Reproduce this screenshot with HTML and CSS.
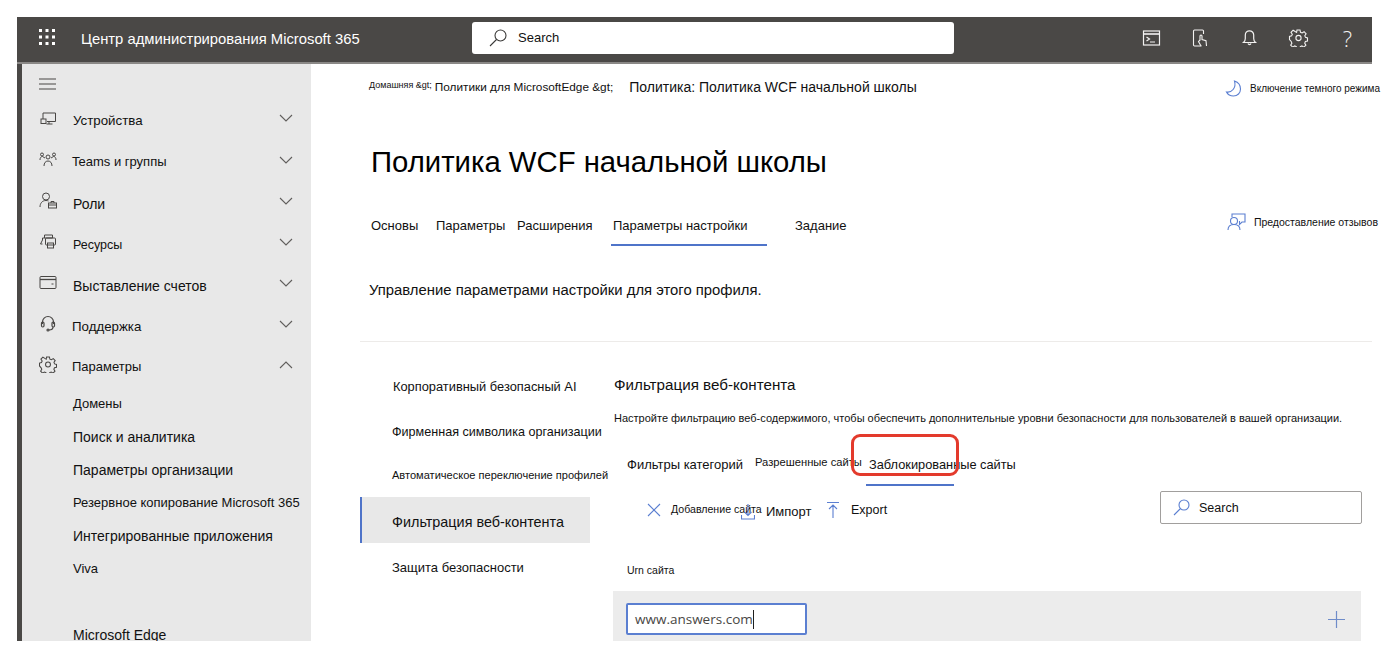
FILE: index.html
```html
<!DOCTYPE html>
<html lang="ru">
<head>
<meta charset="utf-8">
<title>Центр администрирования Microsoft 365</title>
<link rel="stylesheet" href="styles.css">
</head>
<body>
<div class="shell">
  <header class="topbar">
    <div class="waffle"><svg width="16" height="16" viewBox="0 0 16 16" fill="#fff"><rect x="0" y="0" width="3" height="3"/><rect x="6.5" y="0" width="3" height="3"/><rect x="13" y="0" width="3" height="3"/><rect x="0" y="6.5" width="3" height="3"/><rect x="6.5" y="6.5" width="3" height="3"/><rect x="13" y="6.5" width="3" height="3"/><rect x="0" y="13" width="3" height="3"/><rect x="6.5" y="13" width="3" height="3"/><rect x="13" y="13" width="3" height="3"/></svg></div>
    <div class="appname">Центр администрирования Microsoft 365</div>
    <div class="topsearch">
      <svg width="20" height="20" viewBox="0 0 20 20" fill="none" stroke="#3b3a39" stroke-width="1.1"><circle cx="12.5" cy="7.5" r="5.5"/><path d="M8.5 11.5 2 18"/></svg>
      <span>Search</span>
    </div>
    <div class="topicons">
      <svg width="18" height="16" viewBox="0 0 18 16" fill="none" stroke="#f3f2f1" stroke-width="1.2"><rect x="1" y="1" width="16" height="14"/><path d="M1 4h16" stroke-width="1.6"/><path d="M4 7l3 2-3 2M7.500 12h5"/></svg>
      <svg width="16" height="18" viewBox="0 0 16 18" fill="none" stroke="#f3f2f1" stroke-width="1.1"><path d="M9 17H2a1 1 0 0 1-1-1V2a1 1 0 0 1 1-1h8a1 1 0 0 1 1 1v3"/><path d="M7.500 11.500V7a1 1 0 0 1 2 0v3.500l4 1.200.5 5.300M7.500 11l-1.500 1.500 2.500 4.500"/></svg>
      <svg width="14" height="17" viewBox="0 0 14 17" fill="none" stroke="#f3f2f1" stroke-width="1.2"><path d="M1 13.500h12c-1.200-1-1.800-2-1.800-4V6A4.200 4.200 0 0 0 2.800 6v3.500c0 2-.6 3-1.800 4z"/><path d="M5.500 14.500a1.600 1.600 0 0 0 3 0"/></svg>
      <svg width="18" height="18" viewBox="0 0 18 18" fill="none" stroke="#f3f2f1" stroke-width="1.1"><circle cx="9" cy="9" r="2.600"/><path d="M7.500 1h3l.5 2.300 1.600.7 2-1.300 2 2.100-1.300 2 .7 1.600 2 .6v3l-2.100.5-.7 1.600 1.200 2-2 2-2-1.200-1.600.7-.5 2.100h-3l-.5-2.100-1.600-.7-2 1.200-2-2 1.200-2-.7-1.600L0 10.500v-3l2.100-.6.700-1.600-1.300-2 2.100-2.100 2 1.300L7.100 3.300z"/></svg>
      <span class="help">?</span>
    </div>
  </header>
  <div class="workspace">
    <nav class="sidebar">
      <div class="hamburger"><svg width="17" height="12" viewBox="0 0 17 12" stroke="#484644" stroke-width="1.2"><path d="M0 1h17M0 6h17M0 11h17"/></svg></div>
      <ul class="navmain">
        <li class="navitem"><svg class="navicon" width="16" height="14" viewBox="0 0 16 14" fill="none" stroke="#484644"><path d="M3 7V1h12.500v8.500H7M9 9.500V12M6.500 12h6"/><rect x="1" y="7" width="5" height="4.500"/></svg><span class="navlabel l133 in1">Устройства</span><svg class="chev" width="14" height="8" viewBox="0 0 14 8" fill="none" stroke="#605e5c" stroke-width="1.100"><path d="M1 1l6 6 6-6"/></svg></li>
        <li class="navitem"><svg class="navicon" width="18" height="15" viewBox="0 0 18 15" fill="none" stroke="#484644"><circle cx="9" cy="5" r="2"/><circle cx="3" cy="2.500" r="1.500"/><circle cx="15" cy="2.500" r="1.500"/><path d="M5 14c0-3 1.500-5 4-5s4 2 4 5M1 8c0-2 .8-3.500 2.500-3.500L6 6M17 8c0-2-.8-3.500-2.500-3.500L12 6"/></svg><span class="navlabel">Teams и группы</span><svg class="chev low" width="14" height="8" viewBox="0 0 14 8" fill="none" stroke="#605e5c" stroke-width="1.100"><path d="M1 1l6 6 6-6"/></svg></li>
        <li class="navitem down"><svg class="navicon" width="18" height="17" viewBox="0 0 18 17" fill="none" stroke="#484644"><circle cx="7" cy="4.500" r="3.500"/><path d="M1 15c0-3.500 2-6.500 6-6.500 1 0 1.800.2 2.500.5"/><rect x="9.500" y="11" width="8" height="5"/><path d="M12 11V9.500h3V11M9.500 13h8"/></svg><span class="navlabel l14 in1">Роли</span><svg class="chev low" width="14" height="8" viewBox="0 0 14 8" fill="none" stroke="#605e5c" stroke-width="1.100"><path d="M1 1l6 6 6-6"/></svg></li>
        <li class="navitem down"><svg class="navicon" width="17" height="15" viewBox="0 0 17 15" fill="none" stroke="#484644"><path d="M5 4V1h8v3M3 10H1l2-4v-2h10"/><rect x="6" y="4" width="10" height="7" rx="1"/><rect x="8" y="9" width="6" height="5"/></svg><span class="navlabel l125 in1">Ресурсы</span><svg class="chev low" width="14" height="8" viewBox="0 0 14 8" fill="none" stroke="#605e5c" stroke-width="1.100"><path d="M1 1l6 6 6-6"/></svg></li>
        <li class="navitem down"><svg class="navicon" width="17" height="13" viewBox="0 0 17 13" fill="none" stroke="#484644"><rect x=".5" y=".5" width="16" height="12" rx="1"/><path d="M.5 3.500h16" stroke-width="1.300"/><path d="M12 8h2"/></svg><span class="navlabel l14 in1">Выставление счетов</span><svg class="chev low" width="14" height="8" viewBox="0 0 14 8" fill="none" stroke="#605e5c" stroke-width="1.100"><path d="M1 1l6 6 6-6"/></svg></li>
        <li class="navitem down"><svg class="navicon" width="16" height="17" viewBox="0 0 16 17" fill="none" stroke="#484644" stroke-width="1.200"><path d="M2.500 9V7a5.500 5.500 0 0 1 11 0v2"/><rect x="1.500" y="7" width="2.500" height="5" rx="1.200"/><rect x="12" y="7" width="2.500" height="5" rx="1.200"/><path d="M13 12c0 2-2 3-4 3"/><circle cx="8" cy="15" r="1"/></svg><span class="navlabel l133">Поддержка</span><svg class="chev low" width="14" height="8" viewBox="0 0 14 8" fill="none" stroke="#605e5c" stroke-width="1.100"><path d="M1 1l6 6 6-6"/></svg></li>
        <li class="navitem"><svg class="navicon" width="17" height="17" viewBox="0 0 18 18" fill="none" stroke="#484644" stroke-width="1.100"><circle cx="9" cy="9" r="2.600"/><path d="M7.500 1h3l.5 2.300 1.600.7 2-1.300 2 2.100-1.300 2 .7 1.600 2 .6v3l-2.100.5-.7 1.600 1.200 2-2 2-2-1.200-1.600.7-.5 2.100h-3l-.5-2.100-1.600-.7-2 1.200-2-2 1.200-2-.7-1.600L0 10.500v-3l2.100-.6.700-1.600-1.300-2 2.100-2.100 2 1.300L7.100 3.300z"/></svg><span class="navlabel">Параметры</span><svg class="chev low" width="14" height="8" viewBox="0 0 14 8" fill="none" stroke="#605e5c" stroke-width="1.100"><path d="M1 7l6-6 6 6"/></svg></li>
      </ul>
      <ul class="navsub">
        <li>Домены</li>
        <li class="wide">Поиск и аналитика</li>
        <li class="wide">Параметры организации</li>
        <li>Резервное копирование Microsoft 365</li>
        <li class="wide">Интегрированные приложения</li>
        <li>Viva</li>
        <li class="spacer"></li>
        <li class="wide">Microsoft Edge</li>
      </ul>
    </nav>
    <main class="main">
      <div class="crumbrow">
        <div class="crumbs"><span class="crumb-s">Домашняя &amp;gt;</span><span class="crumb-m">Политики для MicrosoftEdge &amp;gt;</span><span class="crumb-l">Политика: Политика WCF начальной школы</span></div>
        <div class="action darkmode"><svg width="17" height="17" viewBox="0 0 17 17" fill="none" stroke="#5b7fd1" stroke-width="1.100"><path d="M9 1c3 1 6 4 6 8 0 4-3 7-7 7-3 0-6-2-7-4 5 1 10-4 8-11z" transform="translate(.5 0)"/></svg><span>Включение темного режима</span></div>
      </div>
      <h1 class="title">Политика WCF начальной школы</h1>
      <div class="tabrow">
        <div class="tabs">
          <span class="tab t1">Основы</span>
          <span class="tab t2">Параметры</span>
          <span class="tab t3">Расширения</span>
          <span class="tab t4 active">Параметры настройки</span>
          <span class="tab t5">Задание</span>
        </div>
        <div class="action feedback"><svg width="19" height="18" viewBox="0 0 19 18" fill="none" stroke="#5b7fd1" stroke-width="1.100"><path d="M5 4V1h13v8h-3l-2.500 2.500V8"/><circle cx="7" cy="8" r="3.500"/><path d="M1 17c0-3.500 2.500-5.500 6-5.500s6 2 6 5.500"/></svg><span>Предоставление отзывов</span></div>
      </div>
      <p class="intro">Управление параметрами настройки для этого профиля.</p>
      <div class="split">
        <aside class="subnav">
          <div class="sn a">Корпоративный безопасный AI</div>
          <div class="sn b">Фирменная символика организации</div>
          <div class="sn c">Автоматическое переключение профилей</div>
          <div class="sn d">Фильтрация веб-контента</div>
          <div class="sn e">Защита безопасности</div>
        </aside>
        <section class="panel">
          <h2 class="heading">Фильтрация веб-контента</h2>
          <p class="desc">Настройте фильтрацию веб-содержимого, чтобы обеспечить дополнительные уровни безопасности для пользователей в вашей организации.</p>
          <div class="subtabs">
            <span class="st s1">Фильтры категорий</span>
            <span class="st s2">Разрешенные сайты</span>
            <span class="st s3">Заблокированные сайты</span>
            <div class="callout"></div>
          </div>
          <div class="toolbar">
            <svg class="tool-x" width="14" height="14" viewBox="0 0 14 14" stroke="#5b7fd1" stroke-width="1.100"><path d="M1 1l12 12M13 1L1 13"/></svg>
            <span class="tool-add">Добавление сайта</span>
            <svg class="tool-imp" width="14" height="16" viewBox="0 0 14 16" fill="none" stroke="#5b7fd1" stroke-width="1.100"><path d="M7 0v11M3.500 8L7 11.500 10.500 8M.5 11v4h13v-4"/></svg>
            <span class="tool-import">Импорт</span>
            <svg class="tool-exp" width="12" height="16" viewBox="0 0 12 16" fill="none" stroke="#5b7fd1" stroke-width="1.100"><path d="M0 .5h12M6 16V3M2 7l4-4 4 4"/></svg>
            <span class="tool-export">Export</span>
            <div class="boxsearch">
              <svg width="17" height="17" viewBox="0 0 17 17" fill="none" stroke="#5b7fd1" stroke-width="1.100"><circle cx="11" cy="6" r="5"/><path d="M7.500 9.500 1 16"/></svg>
              <span>Search</span>
            </div>
          </div>
          <div class="urlabel">Urn сайта</div>
          <div class="band">
            <div class="urlinput"><span>www.answers.com</span><i class="caret"></i></div>
            <svg width="17" height="17" viewBox="0 0 17 17" stroke="#6f8cc9" stroke-width="1.200"><path d="M8.500 0v17M0 8.500h17"/></svg>
          </div>
        </section>
      </div>
    </main>
  </div>
</div>
</body>
</html>
```
FILE: styles.css
```css
* { box-sizing: border-box; }
html, body { margin: 0; padding: 0; background: #fff; overflow: hidden; }
body { font-family: "Liberation Sans", Arial, sans-serif; color: #111; width: 1390px; height: 652px; }
ul { list-style: none; margin: 0; padding: 0; }
h1, h2, p { margin: 0; font-weight: 400; }

.shell { margin: 17px 0 0 17px; width: 1355px; height: 624px; display: flex; flex-direction: column; }

.topbar { height: 47px; background: #4a4846; border-bottom: 2px solid #8a8886; display: flex; align-items: center; color: #fff; flex: none; }
.waffle { margin-left: 22px; width: 16px; height: 16px; margin-top: -6px; flex: none; }
.appname { margin-left: 26px; font-size: 14.800px; width: 391px; flex: none; white-space: nowrap; margin-top: -2px; }
.topsearch { width: 482px; flex: none; height: 32px; margin-top: -4px; background: #fff; border-radius: 3px; color: #111; display: flex; align-items: center; gap: 10px; padding-left: 16px; font-size: 13px; }
.topicons { margin-left: 173px; flex: none; display: flex; align-items: center; margin-top: -4px; }
.topicons svg { display: block; width: 49px; }
.help { width: 49px; display: flex; justify-content: center; font-family: "Open Sans", sans-serif; font-weight: 300; font-size: 22px; color: #f3f2f1; }

.workspace { flex: 1; display: flex; min-height: 0; border-left: 5px solid #4a4846; }

.sidebar { width: 289px; flex: none; background: #e8e8e8; overflow: hidden; }
.hamburger { height: 36px; padding: 4px 0 0 17px; display: flex; align-items: center; }
.navitem { height: 41px; display: flex; align-items: center; padding-left: 17px; font-size: 13px; }
.navicon { flex: none; width: 18px; margin-top: -4px; }
.navlabel { margin-left: 15px; flex: 1; white-space: nowrap; }
.navlabel.in1 { margin-left: 16px; }
.down .navlabel { margin-top: 2px; }
.l125 { font-size: 12.500px; }
.l133 { font-size: 13.300px; }
.l14 { font-size: 14px; }
.chev { margin-right: 18px; margin-top: -6px; flex: none; }
.chev.low { margin-top: -4px; }
.navsub li { height: 33px; display: flex; align-items: center; padding-left: 51px; font-size: 13px; white-space: nowrap; }
.navsub li.wide { font-size: 14px; }

.main { flex: 1; min-width: 0; padding-left: 49px; display: flex; flex-direction: column; }

.crumbrow { height: 45px; display: flex; align-items: center; justify-content: space-between; padding-left: 9px; flex: none; }
.crumbs { display: flex; align-items: center; white-space: nowrap; }
.crumb-s { font-size: 9px; margin-top: -4px; margin-right: 3px; }
.crumb-m { font-size: 11.800px; margin-right: 16px; }
.crumb-l { font-size: 14px; }
.action { display: flex; align-items: center; white-space: nowrap; font-size: 10px; }
.darkmode { gap: 8px; margin-right: -8px; margin-top: 3px; }
.feedback { gap: 8px; margin-right: -6px; margin-top: -12px; font-size: 10.500px; }

.title { font-size: 29.300px; line-height: 32px; height: 32px; margin: 37px 0 0 11px; white-space: nowrap; color: #000; }

.tabrow { height: 37px; margin-top: 31px; display: flex; justify-content: space-between; align-items: center; padding-left: 11px; flex: none; }
.tabs { display: flex; font-size: 13px; white-space: nowrap; }
.tab { display: block; height: 37px; line-height: 34px; }
.t1 { width: 65px; }
.t2 { width: 81px; }
.t3 { width: 94px; }
.t4 { width: 156px; padding-left: 2px; border-bottom: 2px solid #4f74c9; margin-right: 28px; }

.intro { font-size: 14.850px; margin: 34px 0 0 9px; height: 20px; line-height: 20px; white-space: nowrap; }

.split { margin-top: 41px; border-top: 1px solid #edebe9; display: flex; flex: 1; min-height: 0; }
.subnav { width: 230px; flex: none; padding-top: 22px; white-space: nowrap; }
.sn { padding-left: 32px; display: flex; align-items: center; }
.sn.a { height: 44px; padding-left: 33px; font-size: 12.850px; }
.sn.b { height: 48px; font-size: 12.600px; }
.sn.c { height: 38px; font-size: 11.060px; }
.sn.d { height: 46px; margin-top: 3px; padding-top: 3px; background: #e8e8e8; border-left: 2px solid #4f74c9; padding-left: 30px; font-size: 14.400px; }
.sn.e { height: 48px; font-size: 13px; }

.panel { margin-left: 24px; flex: 1; min-width: 0; font-size: 12px; }
.heading { font-size: 15.200px; line-height: 18px; margin-top: 34px; white-space: nowrap; }
.desc { font-size: 11px; line-height: 14px; margin-top: 17px; white-space: nowrap; }

.subtabs { height: 54px; margin-top: 13px; position: relative; display: flex; align-items: flex-start; padding-left: 13px; white-space: nowrap; }
.st { display: block; }
.s1 { font-size: 13px; width: 128px; line-height: 18px; margin-top: 18px; }
.s2 { font-size: 11.200px; width: 111px; line-height: 16px; margin-top: 16px; }
.s3 { font-size: 12.800px; line-height: 18px; margin-top: 18px; padding-left: 3px; position: relative; }
.s3::after { content: ""; position: absolute; left: 0; top: 28px; width: 88px; height: 2px; background: #4f74c9; }
.callout { position: absolute; left: 237px; top: -4px; width: 108px; height: 42px; border: 3px solid #e33a2c; border-radius: 9px; }

.toolbar { height: 36px; display: flex; align-items: center; position: relative; padding-left: 33px; white-space: nowrap; }
.tool-x { flex: none; }
.tool-add { font-size: 10.600px; margin-left: 10px; width: 70px; margin-top: -2px; }
.tool-imp { flex: none; margin-top: 4px; }
.tool-import { font-size: 13px; margin-left: 11px; margin-top: 3px; width: 45px; }
.tool-exp { flex: none; margin-left: 16px; }
.tool-export { font-size: 12.500px; margin-left: 12px; }
.boxsearch { position: absolute; left: 546px; top: -1px; width: 202px; height: 33px; border: 1px solid #a19f9d; border-radius: 2px; display: flex; align-items: center; gap: 9px; padding-left: 12px; font-size: 12.500px; background: #fff; }

.urlabel { font-size: 10.500px; margin: 35px 0 0 13px; line-height: 14px; height: 14px; }
.band { margin-top: 14px; height: 50px; width: 748px; margin-left: -1px; background: #ececec; display: flex; align-items: center; justify-content: space-between; padding: 0 16px 0 13px; }
.urlinput { width: 181px; height: 32px; border: 2px solid #5b7fd1; border-radius: 2px; background: #fff; display: flex; align-items: center; padding-left: 7px; font-size: 13.500px; color: #484644; font-family: "Open Sans", "Liberation Sans", sans-serif; margin-top: 6px; }
.caret { display: inline-block; width: 1px; height: 19px; background: #201f1e; }
.band svg { margin-top: 6px; }
```
